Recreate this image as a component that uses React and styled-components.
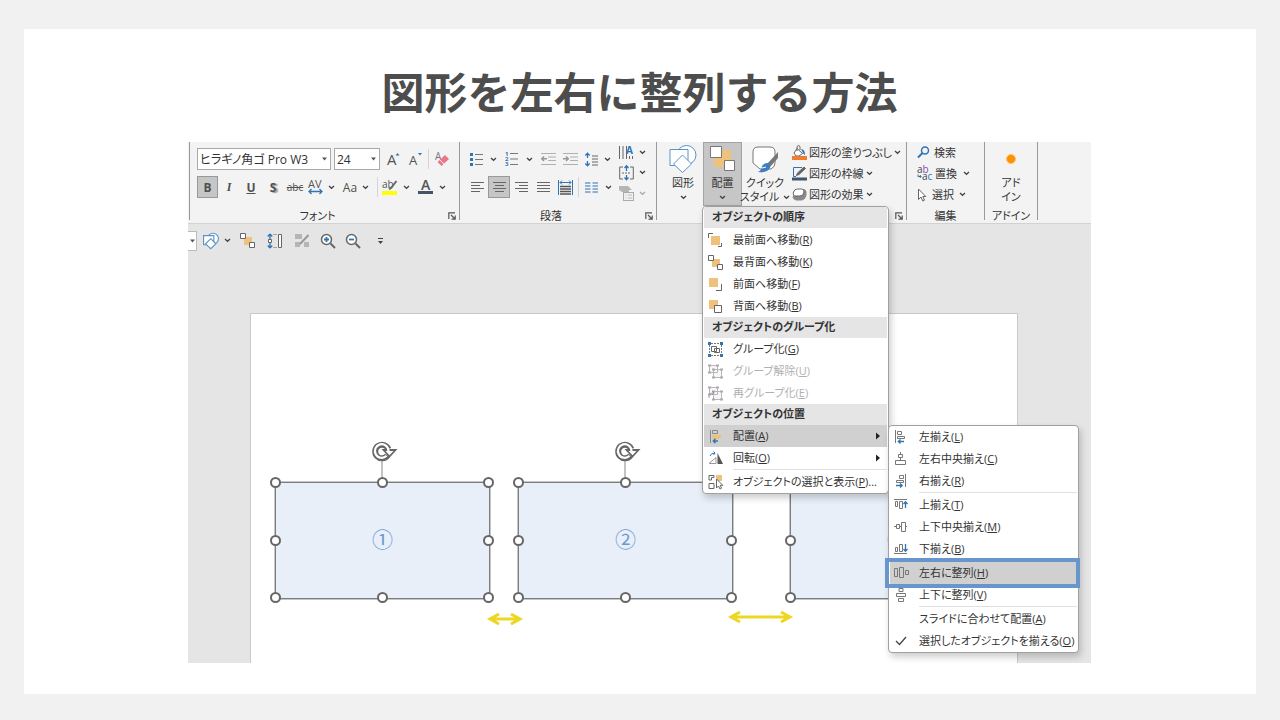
import React from "react"
import styled, { createGlobalStyle } from "styled-components"

const gray = "#666"
const blue = "#2f75b5"
const orange = "#eec27c"

const GlobalStyle = createGlobalStyle`
    * {
        box-sizing: border-box;
    }
    body {
        margin: 0;
        background: #f1f1f1;
        color: #333;
        font-family: "Open Sans", "Noto Sans CJK JP", sans-serif;
        font-size: 11px;
        font-feature-settings: "palt";
    }
    button, select {
        margin: 0;
        padding: 0;
        border: 0;
        background: none;
        color: inherit;
        font: inherit;
        font-feature-settings: inherit;
    }
    svg {
        display: block;
        flex: none;
        overflow: visible;
    }
`

const Page = styled.main`
    display: flex;
    min-height: 100vh;
    padding: 29px 24px 26px;
`

const Card = styled.section`
    display: flex;
    flex-direction: column;
    flex: 1;
    min-width: 0;
    padding: 31px 165px 31px 164px;
    background: #fff;
`

const Title = styled.h1`
    margin: 0 0 22px;
    color: #4d4d4d;
    font-family: "Noto Sans CJK JP", sans-serif;
    font-size: 43px;
    font-weight: 700;
    font-feature-settings: normal;
    line-height: 60px;
    text-align: center;
    white-space: nowrap;
`

const Window = styled.div`
    position: relative;
    display: flex;
    flex-direction: column;
    flex: 1;
    background: #e5e5e5;
`

const Ribbon = styled.div`
    display: flex;
    height: 82px;
    padding: 0 0 3px 1px;
    border-bottom: 1px solid #d2d2d2;
    background: #f3f3f3;
`

const Group = styled.section`
    display: flex;
    flex-direction: column;
    flex: none;
    width: ${props => props.$width}px;
    border-right: 1px solid #999;
    ${props => props.$first && "border-left: 1px solid #999;"}
`

const GroupBody = styled.div`
    display: flex;
    flex: 1;
    padding-left: ${props => props.$pad || 0}px;
`

const GroupFooter = styled.div`
    display: grid;
    grid-template-columns: ${props => (props.$launcher ? "1fr 14px" : "1fr")};
    align-items: center;
    justify-items: center;
    height: 8px;
    line-height: 8px;
    white-space: nowrap;
`

const Rows = styled.div`
    display: flex;
    flex-direction: column;
    gap: 6px;
    padding-top: 6px;
`

const Row = styled.div`
    display: flex;
    align-items: center;
    height: 22px;
`

const Stack = styled.div`
    display: flex;
    flex-direction: column;
    padding-left: ${props => props.$pad || 0}px;
`

const ToolButton = styled.button`
    display: flex;
    align-items: center;
    justify-content: center;
    gap: ${props => props.$gap || 5}px;
    flex: none;
    width: ${props => props.$width || 22}px;
    height: ${props => props.$height || 22}px;
    ${props => props.$active && "border: 1px solid #999; background: #c6c6c6;"}
`

const Divider = styled.span`
    width: 1px;
    height: 20px;
    margin: 0 ${props => props.$space || 2}px;
    background: #d5d5d5;
`

const SelectBox = styled.label`
    position: relative;
    display: flex;
    width: ${props => props.$width}px;
    height: 22px;
    margin-right: ${props => props.$after || 0}px;
    border: 1px solid #aaa;
    background: #fff;
    select {
        flex: 1;
        width: 100%;
        padding-left: 2px;
        appearance: none;
        font-size: 12px;
    }
    svg {
        position: absolute;
        top: 8px;
        right: 3px;
        pointer-events: none;
    }
`

const Glyph = styled.span`
    color: #505050;
    font-size: 12px;
    font-weight: ${props => (props.$bold ? 700 : 400)};
    font-style: ${props => (props.$italic ? "italic" : "normal")};
    font-family: ${props => (props.$italic ? '"Liberation Serif", serif' : "inherit")};
    text-decoration: ${props => props.$line || "none"};
    text-shadow: ${props => (props.$shadow ? "2px 1px 1px #999" : "none")};
`

const SmallGlyph = styled(Glyph)`
    font-size: 10px;
`

const BigButton = styled.button`
    display: flex;
    flex-direction: column;
    align-items: center;
    flex: none;
    width: ${props => props.$width}px;
    height: 64px;
    padding-top: 2px;
    border: 1px solid ${props => (props.$active ? "#a3a3a3" : "transparent")};
    background: ${props => (props.$active ? "#c6c6c6" : "transparent")};
    line-height: 14px;
    white-space: nowrap;
`

const BigIcon = styled.span`
    display: flex;
    align-items: center;
    justify-content: center;
    height: 27px;
    margin-bottom: 4px;
`

const BigCaption = styled.span`
    display: flex;
    align-items: center;
    gap: 4px;
    min-height: 14px;
`

const CommandButton = styled.button`
    display: flex;
    align-items: center;
    gap: ${props => props.$gap || 4}px;
    height: 21px;
    white-space: nowrap;
    line-height: 14px;
`

const QuickBar = styled.div`
    display: flex;
    align-items: center;
    height: 33px;
`

const QuickSelect = styled.button`
    display: flex;
    align-items: center;
    justify-content: center;
    width: 9px;
    height: 20px;
    margin-right: 4px;
    border: 1px solid #bbb;
    border-left: 0;
    background: #fff;
`

const Canvas = styled.div`
    display: flex;
    flex: 1;
    padding: 56px 73px 0 62px;
`

const Slide = styled.div`
    position: relative;
    flex: 1;
    border: 1px solid #c9c9c9;
    border-bottom: 0;
    background: #fff;
`

const Shape = styled.div`
    position: absolute;
    left: ${props => props.$left}px;
    top: 168px;
    display: flex;
    align-items: center;
    justify-content: center;
    width: 215px;
    height: 117px;
    padding-bottom: 5px;
    border: 1px solid #7d7d7d;
    outline: 1px solid #c4c6c9;
    background: #e8eff8;
    color: #6d99d2;
    font-family: "Noto Sans CJK JP", sans-serif;
    font-size: 21px;
    line-height: 30px;
`

const Handle = styled.span`
    position: absolute;
    left: ${props => props.$x};
    top: ${props => props.$y};
    width: 11px;
    height: 11px;
    margin: -6px;
    border: 2px solid #666;
    border-radius: 50%;
    background: #fff;
`

const Rotator = styled.span`
    position: absolute;
    left: 50%;
    bottom: 100%;
    margin-left: -12px;
`

const Gap = styled.span`
    position: absolute;
    left: ${props => props.$left}px;
    top: ${props => props.$top}px;
`

const Menu = styled.div`
    position: absolute;
    left: ${props => props.$left}px;
    top: ${props => props.$top}px;
    width: ${props => props.$width}px;
    border: 1px solid #a0a0a0;
    border-radius: 4px;
    background: #fff;
    box-shadow: 2px 4px 7px rgba(0, 0, 0, 0.2);
`

const MenuHeader = styled.div`
    height: 21px;
    margin: 0 1px;
    padding-left: 8px;
    background: #e5e5e5;
    font-weight: 700;
    line-height: 20px;
    &:first-child {
        margin-bottom: 1px;
    }
`

const MenuItem = styled.button`
    position: relative;
    display: grid;
    grid-template-columns: 25px 1fr 11px;
    align-items: center;
    width: calc(100% - 2px);
    height: 22px;
    margin: 0 1px;
    padding-left: 4px;
    background: ${props => (props.$active ? "#d0d0d0" : "transparent")};
    color: ${props => (props.disabled ? "#b0b0b0" : "#333")};
    line-height: 20px;
    text-align: left;
    white-space: nowrap;
    ${props => props.$framed && `
        &::after {
            content: "";
            position: absolute;
            inset: -4px -3px -4px -5px;
            border: 4px solid #6895cb;
        }
    `}
`

const MenuLine = styled.div`
    height: 2px;
    margin: 0 1px 0 30px;
    border-top: 1px solid #e0e0e0;
`

function Icon({ w, h, children }) {
    return <svg width={w} height={h} viewBox={`0 0 ${w} ${h}`} fill="none" stroke={gray} aria-hidden="true">
        {children}
    </svg>
}

const Chevron = ({ color = "#444" }) => <Icon w={7} h={5}>
    <path d="M1 1l2.5 2.3L6 1" stroke={color} strokeWidth="1.3" />
</Icon>

const Caret = () => <Icon w={5} h={4}><path d="M0 .5h5L2.5 3.5z" fill="#555" stroke="none" /></Icon>

const Launcher = () => <Icon w={8} h={8}>
    <path d="M.8 7V.8H7M3 3l4 4M7.2 3.5v3.7H3.5" stroke="#555" strokeWidth="1.2" />
</Icon>

const GrowFont = ({ down }) => <Icon w={14} h={15}>
    <text x="1" y="13" fontSize={down ? 13 : 15} fill="#555" stroke="none">A</text>
    <path d={down ? "M10 1h4l-2 2.4z" : "M9.5 3.5h4l-2-2.4z"} fill={blue} stroke="none" />
</Icon>

const Eraser = () => <Icon w={14} h={15}>
    <text x="0" y="8" fontSize="10" fill="#777" stroke="none">A</text>
    <path d="M2.5 10L10 3l4 4-7.500 7z" fill="#e8788a" stroke="none" />
    <path d="M4.8 7.800l4 4.200" stroke="#f3f3f3" />
</Icon>

const Spacing = () => <Icon w={15} h={15}>
    <text x="0" y="8" fontSize="11" fill="#555" stroke="none">AV</text>
    <path d="M1 11.5h13M3.5 9L1 11.5 3.5 14M11.5 9l2.5 2.5-2.5 2.5" stroke={blue} strokeWidth="1.3" />
</Icon>

const Highlighter = () => <Icon w={16} h={16}>
    <text x="0" y="9" fontSize="10" fill="#555" stroke="none">ab</text>
    <path d="M14.5 2L9 9l-2 1" strokeWidth="2" />
    <rect x="0" y="12" width="15" height="4" fill="#ffff00" stroke="none" />
</Icon>

const FontColor = () => <Icon w={15} h={16}>
    <text x="3" y="11" fontSize="14" fontWeight="600" fill="#555" stroke="none">A</text>
    <rect x="0" y="12" width="15" height="3" fill="#44546a" stroke="none" />
</Icon>

const Bullets = () => <Icon w={14} h={15}>
    <path d="M5 2.5h8M5 7.5h8M5 12.5h8" stroke="#777" />
    <path d="M0 2.5h3M0 7.5h3M0 12.5h3" stroke={blue} strokeWidth="3" />
</Icon>

const Numbers = () => <Icon w={14} h={16}>
    <path d="M5 2.5h8M5 8h8M5 13.5h8" stroke="#777" />
    <text fill={blue} stroke="none" fontSize="6" fontWeight="700">
        <tspan x="0" y="5">1</tspan><tspan x="0" y="10">2</tspan><tspan x="0" y="15">3</tspan>
    </text>
</Icon>

const Indent = ({ right }) => <Icon w={15} h={12}>
    <path d="M0 .5h15M7 4h8M7 7.5h8M0 11.5h15" stroke="#b0b0b0" />
    <path d={right ? "M0 5.8h5M3 3.5l2.3 2.3L3 8" : "M6 5.8H1M3 3.5L.8 5.8 3 8"} stroke="#999" strokeWidth="1.5" />
</Icon>

const LineSpacing = () => <Icon w={14} h={15}>
    <path d="M2.5 1v5M.3 3.5l2.2-2.3 2.2 2.3M2.5 14V9M.3 11.5l2.2 2.3 2.2-2.3" stroke={blue} strokeWidth="1.3" />
    <path d="M7 4h6M7 7h6M7 10h6M7 13h6" />
</Icon>

const TextDirection = () => <Icon w={15} h={15}>
    <path d="M.5 1v13M4 1v13M7.5 1v13M10.5 11v3M13.5 11v3" />
    <text x="7" y="9" fontSize="10" fontWeight="700" fill={blue} stroke="none">A</text>
</Icon>

const AlignText = () => <Icon w={15} h={15}>
    <path d="M4 2H.7v12H4M11 2h3.3v12H11" />
    <path d="M3 8h9" strokeDasharray="2 1" />
    <path d="M7.5 1v5M5.5 3l2-2.2 2 2.2M7.5 10v4.5M5.5 12.5l2 2.2 2-2.2" stroke={blue} strokeWidth="1.3" />
</Icon>

const SmartArt = () => <Icon w={15} h={15}>
    <path d="M0 0h9l4 4h-3v2H3L0 4z" fill="#b5b5b5" stroke="none" />
    <rect x="4.5" y="6.5" width="10" height="8" fill="#f3f0f3" stroke="#aaa" />
    <path d="M6.5 9h1M9 9h4M6.5 12h1M9 12h4" stroke="#bbb" />
</Icon>

const alignPaths = {
    left: "M0 .5h13M0 3.5h9M0 6.5h13M0 9.5h9",
    center: "M0 .5h13M2 3.5h9M0 6.5h13M2 9.5h9",
    right: "M0 .5h13M4 3.5h9M0 6.5h13M4 9.5h9",
    justify: "M0 .5h13M0 3.5h13M0 6.5h13M0 9.5h13",
}

const Align = ({ kind }) => <Icon w={13} h={10}><path d={alignPaths[kind]} /></Icon>

const Distribute = () => <Icon w={15} h={15}>
    <path d="M.5 0v15M14.5 0v15M2 2.5h11M4 .5l-2 2 2 2M11 .5l2 2-2 2" stroke={blue} />
    <path d="M2 6.5h11M2 9h11M2 11.5h11M2 14h11" stroke="#555" strokeWidth="1.5" />
</Icon>

const Columns = () => <Icon w={13} h={11}>
    <path d="M0 1h5.5M0 4h5.5M0 7h5.5M0 10h5.5M7.5 1H13M7.5 4H13M7.5 7H13M7.5 10H13" stroke={blue} />
</Icon>

const Shapes = ({ size = 28 }) => <svg width={size} height={size} viewBox="0 0 28 28" fill="#fff" stroke="#5b93c8" strokeWidth={size < 20 ? 2 : 1} aria-hidden="true">
    <circle cx="17.5" cy="10" r="9.5" />
    <path d="M1 4.5h18v16H1z" />
    <path d="M13.5 10l9 9-9 8.500-9-8.500z" />
</svg>

const Arrange = () => <Icon w={26} h={26}>
    <path d="M4 4h17v17H4z" fill={orange} stroke="none" />
    <path d="M.5.5h11v11H.5zM14.5 14.5h10v10h-10z" fill="#fff" stroke="#777" />
</Icon>

const QuickStyle = () => <Icon w={28} h={28}>
    <path d="M7 2h12q5 0 5 5v11q0 4-4 6H9l-7-6V7q0-5 5-5z" fill="#fff" stroke="#777" />
    <path d="M27 7v6l-8 9-3-3z" fill="#777" stroke="none" />
    <path d="M16 18q4 1 3 5-3 5-12 4 4-2 4-6 2-3 5-3z" fill="#3c7ebf" stroke="none" />
    <path d="M11 23l4-1" stroke="#fff" />
</Icon>

const FillIcon = () => <Icon w={15} h={15}>
    <path d="M5 3.5l5.5 5-3.5 2.5H4L2 8z" fill="#fff" />
    <path d="M5 6V1.500q2-2 3 0V5" />
    <path d="M9 4q4 0 4 6-2-1-2.500-3z" fill={blue} stroke="none" />
    <path d="M0 11h15v4H0z" fill="#ed7d31" stroke="none" />
</Icon>

const OutlineIcon = () => <Icon w={15} h={15}>
    <path d="M10 1.5H1.5v9H4" stroke={blue} />
    <path d="M4.5 9.5l1-2.5 6.5-6 1.5 1.5L7 8.500z" fill={gray} stroke={gray} />
    <path d="M0 11.500h15v3H0z" fill="#44546a" stroke="none" />
</Icon>

const EffectIcon = () => <Icon w={15} h={13}>
    <path d="M5 1.5h6q3 0 3 2.5v3q-1 5-5 5H4q-3-1-3-3z" fill="#888" stroke="#888" />
    <path d="M5.5 1h4q3 0 2.5 3-.5 4-4 4h-4q-3.500 0-2.500-4 1-3 4-3z" fill="#fff" />
</Icon>

const Search = ({ sign }) => <Icon w={16} h={16}>
    <circle cx="6.5" cy="6.5" r="5" fill="#fff" strokeWidth="1.5" />
    <path d="M10.5 10.5l4.5 4.5" strokeWidth="2" />
    <path d={sign === "+" ? "M4 6.5h5M6.5 4v5" : "M4 6.5h5"} stroke={blue} strokeWidth="1.8" />
</Icon>

const Find = () => <Icon w={13} h={13}>
    <circle cx="8" cy="4.5" r="3.5" stroke={blue} strokeWidth="1.5" />
    <path d="M5.5 7L1 11.5" stroke={blue} strokeWidth="2" />
</Icon>

const Replace = () => <Icon w={15} h={15}>
    <text stroke="none" fontSize="10">
        <tspan x="0" y="7" fill="#444">a</tspan><tspan fill="#8a4bb0">b</tspan>
        <tspan x="5" y="14" fill="#444">a</tspan><tspan fill={blue}>c</tspan>
    </text>
    <path d="M1 8.500v2h3M2.800 9l1.500 1.500L2.800 12" stroke={blue} />
</Icon>

const Cursor = () => <Icon w={10} h={14}>
    <path d="M1.5 1v10.5l2.5-2.5 1.800 4 1.700-.8L5.800 8.500h3z" fill="#fff" />
</Icon>

const SendBack = () => <Icon w={15} h={15}>
    <path d="M4 4h8v8H4z" fill={orange} stroke="none" />
    <path d="M.5.5h5v5h-5zM9.5 9.5h5v5h-5z" fill="#fff" />
</Icon>

const BringFront = () => <Icon w={15} h={15}>
    <path d="M.5 5V.5H5M10 13.5h3.5V10" />
    <path d="M3 3h9v9H3z" fill={orange} stroke="none" />
</Icon>

const Forward = () => <Icon w={15} h={15}>
    <path d="M8 13.5h5.5V7" />
    <path d="M1 1h9v9H1z" fill={orange} stroke="none" />
</Icon>

const Backward = () => <Icon w={15} h={15}>
    <path d="M1 1h9v9H1z" fill={orange} stroke="none" />
    <path d="M6.5 6.5h7v7h-7z" fill="#fff" />
</Icon>

const GroupIcon = () => <Icon w={15} h={15}>
    <path d="M3 1.5h9M3 13.5h9M1.5 3v9M13.5 3v9" stroke="#777" strokeDasharray="2 1" />
    <path d="M3.5 4.5h5v5h-5zM6.5 6.500h5v4h-5z" />
    <path d="M0 1.5h3M12 1.5h3M0 13.5h3M12 13.5h3" stroke={blue} strokeWidth="3" />
</Icon>

const UngroupIcon = ({ again }) => <Icon w={15} h={15}>
    <path d="M1.5 1.5h8v7h-8zM5.5 5.5h8v8h-8z" fill="#faf5fa" stroke="#b8b8b8" />
    <path d="M0 1.5h3M8 1.5h3M0 8.5h3M4 5.5h3M12 5.5h3M4 13.5h3M12 13.5h3" stroke="#aaa" strokeWidth="2" />
    {again && <path d="M1 12q-1-5 5-5M4 5l2 2-2 2" stroke="#999" />}
</Icon>

const PlaceIcon = () => <Icon w={15} h={15}>
    <path d="M2.5 1v13M4.5 1.5h5v3h-5z" stroke="#888" />
    <path d="M4 6h9v4H4z" fill={orange} stroke="none" />
    <path d="M5 12h5M7.5 9.8L5.2 12l2.3 2.2" stroke={blue} strokeWidth="1.3" />
</Icon>

const RotateIcon = () => <Icon w={15} h={14}>
    <path d="M1 12.5h7v-6z" stroke="#999" />
    <path d="M9.5 2v11H15z" fill="#555" stroke="none" />
    <path d="M2 5q1-3 5-3M5.500.5L7 2 5.500 4" stroke={blue} />
</Icon>

const SelectionIcon = () => <Icon w={16} h={16}>
    <path d="M1 1.5h5v2H3.5V6H1zM1 9.5h5v5H1z" />
    <path d="M8 1h6v6H8z" fill={orange} stroke="none" />
    <path d="M8.5 5v9l2-2 1.5 3 1.500-.8-1.300-2.900h2.600z" fill="#fff" />
</Icon>

const alignIcons = {
    left: ["M1.5 0v13M3.5 1.5h4v3h-4zM3.5 6.5h7v2h-7z", "M4 11.5h6M6.5 9.5L4.3 11.5l2.2 2"],
    center: ["M6.5 0v2M4.5 2.5h4v3h-4zM6.5 6v2M1.5 8.5h10v4h-10z", ""],
    right: ["M11.5 0v13M5.5 1.5h4v3h-4zM2.5 6.5h7v2h-7z", "M2 11.5h6M6 9.5l2.2 2-2.2 2"],
    top: ["M0 1.5h13M1.5 3.5h2v5h-2zM5.5 3.5h3v7h-3z", "M11.5 10V4M9.5 6l2-2.300 2 2.300"],
    middle: ["M0 6.5h2M2.5 4.5h3v4h-3zM5.5 6.5h2M7.500 2.500h4v9h-4zM12 6.500h1", ""],
    bottom: ["M0 11.5h13M1.5 5.5h2v4h-2zM5.5 2.5h3v7h-3z", "M11.5 2v7M9.5 7l2 2.3 2-2.3"],
    across: ["M0.5 2.5h3v8h-3zM5.5 1.5h4v10h-4zM11.5 4.500h3v4h-3z", ""],
    down: ["M5 .5h4v3H5zM2.5 5.5h9v3h-9zM4.5 10.5h5v3h-5z", ""],
}

const AlignIcon = ({ kind }) => <Icon w={15} h={14}>
    <path d={alignIcons[kind][0]} stroke="#777" />
    <path d={alignIcons[kind][1]} stroke={blue} strokeWidth="1.3" />
</Icon>

const Check = () => <Icon w={14} h={12}><path d="M2 6l3.5 3.5L12 2" stroke="#444" strokeWidth="1.3" /></Icon>

const SubArrow = () => <Icon w={5} h={8}><path d="M0 .5L4 4 0 7.500z" fill="#222" stroke="none" /></Icon>

const Spread = () => <Icon w={16} h={16}>
    <path d="M3 2v5M3 1L.8 3.5M3 1l2.2 2.5M3 15V9M3 15L.8 12.5M3 15l2.2-2.5" stroke={blue} strokeWidth="1.3" />
    <path d="M1.5 6.5h3v3h-3z" fill="#fff" />
    <path d="M6.5 1.5h3M6.5 14.5h3" strokeDasharray="1 1" />
    <path d="M11.5 1.5h3v13h-3z" fill="#fff" />
</Icon>

const EditPoints = () => <Icon w={14} h={14}>
    <path d="M0 0h7v5H0zM0 8h5v5H0zM9 8h5v5H9z" fill="#b5b5b5" stroke="none" />
    <path d="M13.5 1L5 10" stroke="#9a9a9a" strokeWidth="2" />
</Icon>

const Customize = () => <Icon w={7} h={8}>
    <path d="M1 1.5h5" stroke="#444" />
    <path d="M1 4h5L3.5 7z" fill="#444" stroke="none" />
</Icon>

const RotateHandle = () => <Icon w={26} h={42}>
    <path d="M11 18v23" stroke="#888" />
    <path d="M16.5 14.5A6.8 6.8 0 1 1 17.300 8" stroke="#666" strokeWidth="6" />
    <path d="M12.5 9h12l-6 6.500z" fill="#fff" stroke="#666" strokeWidth="1.8" />
    <path d="M15.500 14.800A6.800 6.800 0 1 1 17.500 10" stroke="#fff" strokeWidth="2.200" />
</Icon>

const GapArrow = ({ width }) => <Icon w={width} h={14}>
    <path
        d={`M2 7h${width - 4}M11 2L2 7l9 5M${width - 11} 2l9 5-9 5`}
        stroke="#ecd722"
        strokeWidth="3"
    />
</Icon>

function Item({ icon, text, hotkey, tail, more, ...rest }) {
    return <MenuItem type="button" role="menuitem" {...rest}>
        <span>{icon}</span>
        <span>{text}(<u>{hotkey}</u>){tail}</span>
        {more && <SubArrow />}
    </MenuItem>
}

function Footer({ children, launcher }) {
    return <GroupFooter $launcher={launcher}>
        <span>{children}</span>
        {launcher && <Launcher />}
    </GroupFooter>
}

function SelectedShape({ left, children }) {
    const spots = ["0%", "50%", "100%"]
    return <Shape $left={left}>
        {children}
        <Rotator><RotateHandle /></Rotator>
        {spots.map(y => spots.map(x => (
            x === "50%" && y === "50%" ? null : <Handle key={x + y} $x={x} $y={y} />
        )))}
    </Shape>
}

function FontGroup() {
    return <Group $width={271} $first>
        <GroupBody $pad={7}>
            <Rows>
                <Row>
                    <SelectBox $width={134} $after={3}>
                        <select aria-label="フォント名"><option>ヒラギノ角ゴ Pro W3</option></select>
                        <Caret />
                    </SelectBox>
                    <SelectBox $width={46} $after={2}>
                        <select aria-label="フォントサイズ"><option>24</option></select>
                        <Caret />
                    </SelectBox>
                    <ToolButton aria-label="拡大"><GrowFont /></ToolButton>
                    <ToolButton aria-label="縮小"><GrowFont down /></ToolButton>
                    <Divider />
                    <ToolButton aria-label="書式のクリア"><Eraser /></ToolButton>
                </Row>
                <Row>
                    <ToolButton $active $width={21}><Glyph $bold>B</Glyph></ToolButton>
                    <ToolButton><Glyph $italic $bold>I</Glyph></ToolButton>
                    <ToolButton><Glyph $bold $line="underline">U</Glyph></ToolButton>
                    <ToolButton><Glyph $bold $shadow>S</Glyph></ToolButton>
                    <ToolButton><SmallGlyph $line="line-through">abc</SmallGlyph></ToolButton>
                    <ToolButton $width={31} aria-label="文字の間隔"><Spacing /><Chevron /></ToolButton>
                    <ToolButton $width={38}><Glyph>Aa</Glyph><Chevron /></ToolButton>
                    <Divider $space={2} />
                    <ToolButton $width={32} aria-label="蛍光ペン"><Highlighter /><Chevron /></ToolButton>
                    <ToolButton $width={40} $gap={6} aria-label="フォントの色"><FontColor /><Chevron /></ToolButton>
                </Row>
            </Rows>
        </GroupBody>
        <Footer launcher>フォント</Footer>
    </Group>
}

function ParagraphGroup() {
    return <Group $width={197}>
        <GroupBody $pad={6}>
            <Rows>
                <Row>
                    <ToolButton $width={35} $gap={6} aria-label="箇条書き"><Bullets /><Chevron /></ToolButton>
                    <ToolButton $width={36} $gap={7} aria-label="段落番号"><Numbers /><Chevron /></ToolButton>
                    <ToolButton aria-label="インデントを減らす"><Indent /></ToolButton>
                    <ToolButton aria-label="インデントを増やす"><Indent right /></ToolButton>
                    <ToolButton $width={34} aria-label="行間"><LineSpacing /><Chevron /></ToolButton>
                </Row>
                <Row>
                    <ToolButton aria-label="左揃え"><Align kind="left" /></ToolButton>
                    <ToolButton $active aria-label="中央揃え"><Align kind="center" /></ToolButton>
                    <ToolButton aria-label="右揃え"><Align kind="right" /></ToolButton>
                    <ToolButton aria-label="両端揃え"><Align kind="justify" /></ToolButton>
                    <ToolButton aria-label="均等割り付け"><Distribute /></ToolButton>
                    <Divider />
                    <ToolButton $width={34} $gap={7} aria-label="段組み"><Columns /><Chevron /></ToolButton>
                </Row>
            </Rows>
            <Stack>
                <ToolButton $width={34} $height={20} aria-label="文字列の方向"><TextDirection /><Chevron /></ToolButton>
                <ToolButton $width={34} $height={21} aria-label="文字の配置"><AlignText /><Chevron /></ToolButton>
                <ToolButton $width={34} $height={21} aria-label="SmartArt に変換"><SmartArt /><Chevron color="#aaa" /></ToolButton>
            </Stack>
        </GroupBody>
        <Footer launcher>段落</Footer>
    </Group>
}

function DrawingGroup() {
    return <Group $width={250}>
        <GroupBody $pad={6}>
            <BigButton $width={40}>
                <BigIcon><Shapes /></BigIcon>
                <BigCaption>図形</BigCaption>
                <BigCaption><Chevron /></BigCaption>
            </BigButton>
            <BigButton $width={39} $active aria-expanded="true">
                <BigIcon><Arrange /></BigIcon>
                <BigCaption>配置</BigCaption>
                <BigCaption><Chevron /></BigCaption>
            </BigButton>
            <BigButton $width={46}>
                <BigIcon><QuickStyle /></BigIcon>
                <BigCaption>クイック</BigCaption>
                <BigCaption>スタイル<Chevron /></BigCaption>
            </BigButton>
            <Stack $pad={4}>
                <CommandButton $gap={2}><FillIcon />図形の塗りつぶし<Chevron /></CommandButton>
                <CommandButton $gap={2}><OutlineIcon />図形の枠線<Chevron /></CommandButton>
                <CommandButton $gap={2}><EffectIcon />図形の効果<Chevron /></CommandButton>
            </Stack>
        </GroupBody>
        <Footer launcher />
    </Group>
}

function Toolbar() {
    return <Ribbon>
        <FontGroup />
        <ParagraphGroup />
        <DrawingGroup />
        <Group $width={78}>
            <GroupBody $pad={10}>
                <Stack>
                    <CommandButton><Find />検索</CommandButton>
                    <CommandButton $gap={3}><Replace />置換<span /><Chevron /></CommandButton>
                    <CommandButton $gap={5}><Cursor />選択<Chevron /></CommandButton>
                </Stack>
            </GroupBody>
            <Footer>編集</Footer>
        </Group>
        <Group $width={53}>
            <GroupBody>
                <BigButton $width={52}>
                    <BigIcon><Icon w={12} h={12}><circle cx="6" cy="6" r="4.5" fill="#ff9100" stroke="#ffc36b" /></Icon></BigIcon>
                    <BigCaption>アド</BigCaption>
                    <BigCaption>イン</BigCaption>
                </BigButton>
            </GroupBody>
            <Footer>アドイン</Footer>
        </Group>
    </Ribbon>
}

export default function App() {
    return <Page>
        <GlobalStyle />
        <Card>
            <Title>図形を左右に整列する方法</Title>
            <Window>
                <Toolbar />
                <QuickBar>
                    <QuickSelect aria-label="スタイル"><Caret /></QuickSelect>
                    <ToolButton $width={32} aria-label="図形"><Shapes size={16} /><Chevron /></ToolButton>
                    <ToolButton $width={28} aria-label="最背面へ移動"><SendBack /></ToolButton>
                    <ToolButton $width={27} aria-label="上下に整列"><Spread /></ToolButton>
                    <ToolButton $width={28} aria-label="頂点の編集"><EditPoints /></ToolButton>
                    <ToolButton $width={24} aria-label="拡大表示"><Search sign="+" /></ToolButton>
                    <ToolButton $width={26} aria-label="縮小表示"><Search sign="-" /></ToolButton>
                    <ToolButton $width={28} aria-label="ツールバーの設定"><Customize /></ToolButton>
                </QuickBar>
                <Canvas>
                    <Slide>
                        <SelectedShape left={24}>①</SelectedShape>
                        <SelectedShape left={267}>②</SelectedShape>
                        <SelectedShape left={539}>③</SelectedShape>
                        <Gap $left={237} $top={298}><GapArrow width={34} /></Gap>
                        <Gap $left={478} $top={296}><GapArrow width={63} /></Gap>
                    </Slide>
                </Canvas>

                <Menu role="menu" $left={514} $top={64} $width={187}>
                    <MenuHeader>オブジェクトの順序</MenuHeader>
                    <Item icon={<BringFront />} text="最前面へ移動" hotkey="R" />
                    <Item icon={<SendBack />} text="最背面へ移動" hotkey="K" />
                    <Item icon={<Forward />} text="前面へ移動" hotkey="F" />
                    <Item icon={<Backward />} text="背面へ移動" hotkey="B" />
                    <MenuHeader>オブジェクトのグループ化</MenuHeader>
                    <Item icon={<GroupIcon />} text="グループ化" hotkey="G" />
                    <Item icon={<UngroupIcon />} text="グループ解除" hotkey="U" disabled />
                    <Item icon={<UngroupIcon again />} text="再グループ化" hotkey="E" disabled />
                    <MenuHeader>オブジェクトの位置</MenuHeader>
                    <Item icon={<PlaceIcon />} text="配置" hotkey="A" more $active />
                    <Item icon={<RotateIcon />} text="回転" hotkey="O" more />
                    <MenuLine />
                    <Item icon={<SelectionIcon />} text="オブジェクトの選択と表示" hotkey="P" tail="..." />
                </Menu>

                <Menu role="menu" $left={700} $top={283} $width={191}>
                    <Item icon={<AlignIcon kind="left" />} text="左揃え" hotkey="L" />
                    <Item icon={<AlignIcon kind="center" />} text="左右中央揃え" hotkey="C" />
                    <Item icon={<AlignIcon kind="right" />} text="右揃え" hotkey="R" />
                    <MenuLine />
                    <Item icon={<AlignIcon kind="top" />} text="上揃え" hotkey="T" />
                    <Item icon={<AlignIcon kind="middle" />} text="上下中央揃え" hotkey="M" />
                    <Item icon={<AlignIcon kind="bottom" />} text="下揃え" hotkey="B" />
                    <MenuLine />
                    <Item icon={<AlignIcon kind="across" />} text="左右に整列" hotkey="H" $active $framed />
                    <Item icon={<AlignIcon kind="down" />} text="上下に整列" hotkey="V" />
                    <MenuLine />
                    <Item text="スライドに合わせて配置" hotkey="A" />
                    <Item icon={<Check />} text="選択したオブジェクトを揃える" hotkey="O" />
                </Menu>
            </Window>
        </Card>
    </Page>
}
